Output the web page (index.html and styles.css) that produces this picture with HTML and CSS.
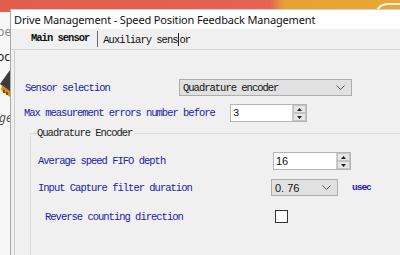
FILE: index.html
```html
<!DOCTYPE html>
<html>
<head>
<meta charset="utf-8">
<link rel="stylesheet" href="styles.css">
</head>
<body>
<div class="desktop">
  <div class="wallpaper"><span class="curl"></span></div>
  <div class="back-app">
    <span class="frag f1">pe</span>
    <span class="frag f2">oc</span>
    <svg class="app-icon" width="10" height="34" viewBox="0 0 10 34">
      <polygon points="10,0 0,14 10,22" fill="#3b3b3b"/>
      <polygon points="2,15 10,21 10,27 1,20" fill="#d98a1c"/>
      <rect x="3" y="20" width="2" height="3" fill="#8a4a00"/>
      <rect x="6" y="22" width="2" height="3" fill="#8a4a00"/>
    </svg>
    <span class="frag f3">ge</span>
  </div>
  <div class="window">
    <div class="titlebar">Drive Management - Speed Position Feedback Management</div>
    <div class="client">
      <div class="tabs">
        <span class="tab tab-active">Main sensor</span>
        <span class="tab-sep"></span>
        <span class="tab">Auxiliary sens<span class="caret"></span>or</span>
      </div>
      <div class="panel">
        <div class="row row1">
          <span class="label lab1">Sensor selection</span>
          <div class="combo combo-wide">
            <span class="combo-text">Quadrature encoder</span>
            <svg class="chev" width="9" height="6" viewBox="0 0 9 6"><polyline points="0.5,0.5 4.5,4.5 8.5,0.5" fill="none" stroke="#555" stroke-width="1"/></svg>
          </div>
        </div>
        <div class="row row2">
          <span class="label lab2">Max measurement errors number before</span>
          <div class="spin spin-a">
            <span class="spin-text">3</span>
            <div class="spin-btns">
              <span class="sbtn"><svg width="5" height="3" viewBox="0 0 5 3"><polygon points="0,3 2.5,0 5,3" fill="#222"/></svg></span>
              <span class="sbtn"><svg width="5" height="3" viewBox="0 0 5 3"><polygon points="0,0 2.5,3 5,0" fill="#222"/></svg></span>
            </div>
          </div>
        </div>
        <div class="group">
          <span class="legend">Quadrature Encoder</span>
          <div class="row row3">
            <span class="label lab3">Average speed FIFO depth</span>
            <div class="spin spin-b">
              <span class="spin-text spin-text-sans">16</span>
              <div class="spin-btns">
                <span class="sbtn"><svg width="5" height="3" viewBox="0 0 5 3"><polygon points="0,3 2.5,0 5,3" fill="#222"/></svg></span>
                <span class="sbtn"><svg width="5" height="3" viewBox="0 0 5 3"><polygon points="0,0 2.5,3 5,0" fill="#222"/></svg></span>
              </div>
            </div>
          </div>
          <div class="row row4">
            <span class="label lab4">Input Capture filter duration</span>
            <div class="combo combo-small">
              <span class="combo-text combo-text-sans">0. 76</span>
              <svg class="chev" width="9" height="6" viewBox="0 0 9 6"><polyline points="0.5,0.5 4.5,4.5 8.5,0.5" fill="none" stroke="#555" stroke-width="1"/></svg>
            </div>
            <span class="unit">usec</span>
          </div>
          <div class="row row5">
            <span class="label lab5">Reverse counting direction</span>
            <span class="check"></span>
          </div>
        </div>
      </div>
    </div>
  </div>
</div>
</body>
</html>
```

FILE: styles.css
```css
html, body {
  margin: 0;
  padding: 0;
}
body {
  width: 400px;
  height: 255px;
  overflow: hidden;
  background: #f3f3f3;
}
.desktop {
  position: relative;
  width: 400px;
  height: 255px;
  overflow: hidden;
}
.wallpaper {
  position: absolute;
  left: 0;
  top: 0;
  width: 400px;
  height: 12px;
  background: linear-gradient(90deg, #e25e4c 0, #e4624f 270px, #e6a233 284px, #e8a835 400px);
}
.curl {
  position: absolute;
  left: 374px;
  top: 3px;
  width: 30px;
  height: 14px;
  border-top: 2px solid #f4efe6;
  border-left: 2px solid #f4efe6;
  border-radius: 14px 0 0 0;
}
.back-app {
  position: absolute;
  left: 0;
  top: 12px;
  width: 10px;
  height: 243px;
  background: #f7f7f7;
  overflow: hidden;
  font-family: "Noto Sans", sans-serif;
  font-size: 12px;
  line-height: 14px;
}
.frag {
  position: absolute;
  left: -3px;
  color: #888;
  white-space: nowrap;
}
.f1 { top: 13px; }
.f2 { top: 38px; color: #222; }
.f3 { top: 99px; left: -1px; font-style: italic; color: #555; }
.app-icon {
  position: absolute;
  left: 0;
  top: 58px;
}
.window {
  position: absolute;
  left: 10px;
  top: 9px;
  width: 420px;
  height: 260px;
  background: #f0f0f0;
  border-left: 1px solid #a8a8a8;
  border-top: 1px solid #d0d0d0;
}
.titlebar {
  height: 19px;
  background: #ffffff;
  padding-left: 3px;
  font-family: "Noto Sans", sans-serif;
  font-size: 11px;
  letter-spacing: -0.15px;
  line-height: 19px;
  color: #111;
  white-space: nowrap;
}
.client {
  background: #f0f0f0;
}
.tabs {
  height: 20px;
  border-bottom: 1px solid #d8d8d8;
  display: flex;
  align-items: center;
  padding-left: 20px;
  font-family: "Liberation Mono", monospace;
  font-size: 10.5px;
  letter-spacing: -1px;
  color: #111;
}
.tab {
  white-space: nowrap;
  position: relative;
}
.tab-active {
  font-weight: bold;
  margin-top: -2px;
}
.tab-sep {
  width: 1px;
  height: 16px;
  background: #6a6a6a;
  margin: 0 5px 0 8px;
}
.caret {
  display: inline-block;
  width: 1px;
  height: 13px;
  background: #222;
  vertical-align: -3px;
  margin-right: 1px;
}
.panel {
  margin-left: 3px;
  border-left: 1px solid #cfcfcf;
  height: 210px;
  padding-top: 29px;
  font-family: "Liberation Mono", monospace;
  font-size: 10.5px;
  letter-spacing: -1px;
}
.row {
  display: flex;
  align-items: center;
}
.label {
  color: #2222aa;
  white-space: nowrap;
  flex: none;
}
.lab1 { width: 154px; padding-left: 10px; }
.lab2 { width: 206px; padding-left: 9px; }
.row2 { margin-top: 8px; }
.combo {
  height: 15px;
  background: #e1e1e1;
  border: 1px solid #adadad;
  display: flex;
  align-items: center;
  justify-content: space-between;
  padding: 0 6px 0 3px;
  color: #111;
}
.combo-wide { width: 162px; }
.combo-small { width: 56px; }
.combo-text { white-space: nowrap; }
.combo-text-sans {
  font-family: "Liberation Sans", sans-serif;
  font-size: 11px;
  letter-spacing: 0;
}
.chev { flex: none; }
.spin {
  height: 16px;
  background: #fff;
  border: 1px solid #b4b4b4;
  display: flex;
  align-items: stretch;
}
.spin-a { width: 75px; }
.spin-b { width: 76px; }
.spin-text {
  flex: 1;
  padding-left: 2px;
  line-height: 16px;
  color: #111;
}
.spin-text-sans {
  font-family: "Liberation Sans", sans-serif;
  font-size: 11px;
  letter-spacing: 0;
}
.spin-btns {
  width: 13px;
  display: flex;
  flex-direction: column;
  border-left: 1px solid #ccc;
}
.sbtn {
  flex: 1;
  background: #e6e6e6;
  border: 1px solid #c4c4c4;
  display: flex;
  align-items: center;
  justify-content: center;
}
.group {
  margin: 11px 0 0 15px;
  border-top: 1px solid #dcdcdc;
  border-left: 1px solid #dcdcdc;
  height: 160px;
  position: relative;
  padding-top: 18px;
}
.legend {
  position: absolute;
  left: 5px;
  top: -7px;
  padding: 0 2px 0 1px;
  background: #f0f0f0;
  color: #222;
  white-space: nowrap;
  line-height: 12px;
}
.lab3 { width: 235px; padding-left: 7px; }
.lab4 { width: 233px; padding-left: 7px; }
.row4 { margin-top: 9px; }
.unit {
  margin-left: 14px;
  color: #2222aa;
  font-weight: bold;
  font-size: 9.5px;
}
.row5 { margin-top: 14px; }
.lab5 { width: 230px; padding-left: 14px; }
.check {
  width: 11px;
  height: 11px;
  border: 1px solid #333;
  background: #fff;
}
```
